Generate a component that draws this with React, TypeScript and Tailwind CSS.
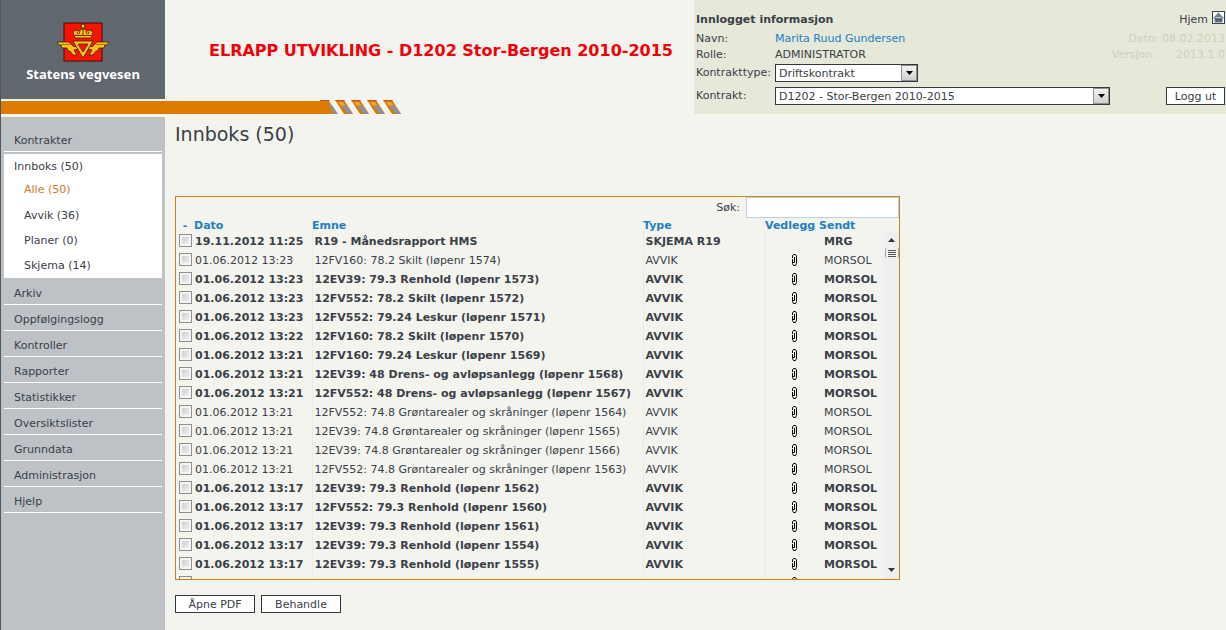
import React from "react";

const mainMenu = [
  "Arkiv",
  "Oppfølgingslogg",
  "Kontroller",
  "Rapporter",
  "Statistikker",
  "Oversiktslister",
  "Grunndata",
  "Administrasjon",
  "Hjelp",
];

const inboxMenu = ["Alle (50)", "Avvik (36)", "Planer (0)", "Skjema (14)"];

type Message = {
  date: string;
  subject: string;
  type: string;
  sender: string;
  unread: boolean;
  attachment: boolean;
};

function deviation(time: string, subject: string, unread = true): Message {
  return {
    date: `01.06.2012 ${time}`,
    subject,
    type: "AVVIK",
    sender: "MORSOL",
    unread,
    attachment: true,
  };
}

const messages: Message[] = [
  {
    date: "19.11.2012 11:25",
    subject: "R19 - Månedsrapport HMS",
    type: "SKJEMA R19",
    sender: "MRG",
    unread: true,
    attachment: false,
  },
  deviation("13:23", "12FV160: 78.2 Skilt (løpenr 1574)", false),
  deviation("13:23", "12EV39: 79.3 Renhold (løpenr 1573)"),
  deviation("13:23", "12FV552: 78.2 Skilt (løpenr 1572)"),
  deviation("13:23", "12FV552: 79.24 Leskur (løpenr 1571)"),
  deviation("13:22", "12FV160: 78.2 Skilt (løpenr 1570)"),
  deviation("13:21", "12FV160: 79.24 Leskur (løpenr 1569)"),
  deviation("13:21", "12EV39: 48 Drens- og avløpsanlegg (løpenr 1568)"),
  deviation("13:21", "12FV552: 48 Drens- og avløpsanlegg (løpenr 1567)"),
  deviation("13:21", "12FV552: 74.8 Grøntarealer og skråninger (løpenr 1564)", false),
  deviation("13:21", "12EV39: 74.8 Grøntarealer og skråninger (løpenr 1565)", false),
  deviation("13:21", "12EV39: 74.8 Grøntarealer og skråninger (løpenr 1566)", false),
  deviation("13:21", "12FV552: 74.8 Grøntarealer og skråninger (løpenr 1563)", false),
  deviation("13:17", "12EV39: 79.3 Renhold (løpenr 1562)"),
  deviation("13:17", "12FV552: 79.3 Renhold (løpenr 1560)"),
  deviation("13:17", "12EV39: 79.3 Renhold (løpenr 1561)"),
  deviation("13:17", "12EV39: 79.3 Renhold (løpenr 1554)"),
  deviation("13:17", "12EV39: 79.3 Renhold (løpenr 1555)"),
  deviation("13:17", "12FV552: 79.3 Renhold (løpenr 1556)"),
];

function Logo() {
  return (
    <svg width="54" height="40" viewBox="0 0 54 40" aria-hidden="true">
      <rect x="8" y="1" width="38" height="38" fill="#f91400" stroke="#3a0f0c" />
      <g fill="#f5c518" stroke="#4a1a08" strokeWidth="0.8" strokeLinejoin="round">
        <path d="M1 20h12l5 5 2-1 2 3-4 1 3 5h-4l-3-4h-2l-1-3H6l-1-3H3z" />
        <path d="M53 20H41l-5 5-2-1-2 3 4 1-3 5h4l3-4h2l1-3h5l1-3h2z" />
        <path fillRule="evenodd" d="M17 19h20L27 36zM22 22l5 8 5-8z" />
        <path d="M19 16l-2-6 3-2 3 1 3-2h2l3 2 3-1 3 2-2 6z" />
        <path d="M26 7V5h-1V3h1V2h2v1h1v2h-1v2z" />
      </g>
      <path
        d="M19 13.500h16M21 9.500l1 3M24 9l-1 3M27 8v5M30 9l1 3M33 9.500l-1 3"
        stroke="#8a2208"
        fill="none"
      />
      <path d="M5 22.500h9M40 22.500h9" stroke="#8a4a08" strokeWidth="0.7" fill="none" />
    </svg>
  );
}

function RoadStripes() {
  return (
    <svg width="81" height="14" viewBox="0 0 81 14" aria-hidden="true">
      <path d="M0 1h9l8 13H0z" fill="#dd7a00" />
      <path d="M-1 0h10l1 1h-11z" fill="#c2502a" />
      <path d="M8 5h4l6 9h-4z" fill="#8f9090" />
      {[15, 31, 47, 63].map((x) => (
        <g key={x}>
          <path d={`M${x} 0h9l9 14h-9z`} fill="#dd7a00" />
          <path d={`M${x} 0h9l1 1h-9z`} fill="#c2502a" />
          <path d={`M${x + 3} 2h5l3 4h-5z`} fill="#f0a030" />
          <path d={`M${x + 7} 7l4-3 7 10h-5z`} fill="#8f9090" />
        </g>
      ))}
    </svg>
  );
}

function HomeIcon() {
  return (
    <svg width="13" height="13" viewBox="0 0 13 13" aria-hidden="true">
      <rect x="0.5" y="0.5" width="12" height="12" fill="#fff" stroke="#3c4248" />
      <path d="M6.500 1.500L11.500 6.500v1H10.500V11.500H2.500V7.500H1.500v-1z" fill="#6f7f93" />
      <path d="M3 8.500h7M4.500 8v3M6.500 8v3M8.500 8v3" stroke="#3f4b5a" strokeWidth="0.8" />
      <path d="M3.500 6.500h6" stroke="#b5c0cd" />
    </svg>
  );
}

function PaperClip() {
  return (
    <svg width="7" height="12" viewBox="0 0 7 12" role="img" aria-label="Vedlegg" className="mx-auto block">
      <path
        d="M1.500 4v-2l1-1.500h2l1 1.500v7.500l-1 2h-2l-1-2v-4.500M3.500 3v5.500h-2"
        fill="none"
        stroke="#000"
      />
    </svg>
  );
}

function DropDown({ id, value, className }: { id: string; value: string; className: string }) {
  return (
    <div className={`flex h-[18px] border border-[#33383d] bg-white ${className}`}>
      <select id={id} className="min-w-0 grow appearance-none pt-px pl-[3px] text-[11px] leading-4 outline-none">
        <option>{value}</option>
      </select>
      <span className="flex w-4 items-center justify-center border border-[#8b9097] bg-linear-to-b from-[#f4f4f4] to-[#cfcfcf]">
        <svg width="7" height="4" viewBox="0 0 7 4" aria-hidden="true">
          <path d="M0 0h7L3.500 4z" fill="#000" />
        </svg>
      </span>
    </div>
  );
}

function Button({ children, className }: { children: React.ReactNode; className: string }) {
  return (
    <button
      type="button"
      className={`h-[18px] border border-[#33383d] bg-white pt-px text-center leading-4 ${className}`}
    >
      {children}
    </button>
  );
}

function Header() {
  return (
    <header className="flex h-[114px]">
      <div className="flex min-w-0 grow flex-col">
        <div className="flex h-[99px]">
          <div className="flex w-[164px] flex-none flex-col items-center bg-[#61676e] pt-[22px]">
            <Logo />
            <span className="mt-1 font-['Noto_Sans',sans-serif] text-[13px] leading-4 font-bold text-white">
              Statens vegvesen
            </span>
          </div>
          <h1 className="grow pt-[41px] pl-11 text-[16px] leading-5 font-bold whitespace-nowrap text-[#f0000a]">
            ELRAPP UTVIKLING - D1202 Stor-Bergen 2010-2015
          </h1>
        </div>
        <div className="mt-px flex h-[14px]">
          <div className="mt-px w-[319px] bg-[#dd7a00]" />
          <RoadStripes />
        </div>
      </div>

      <div className="w-[532px] flex-none bg-[#e6e8da] pt-[11px] pr-px pl-0.5">
        <div className="flex h-4 justify-between leading-[18px]">
          <h2 className="font-bold">Innlogget informasjon</h2>
          <a href="#hjem" className="flex gap-1">
            Hjem <HomeIcon />
          </a>
        </div>
        <div className="mt-[3px] flex h-4 leading-[18px]">
          <span className="w-[79px]">Navn:</span>
          <a href="#bruker" className="grow text-[#2180c0]">
            Marita Ruud Gundersen
          </a>
          <span className="text-[#ced0b8]">Dato: 08.02.2013</span>
        </div>
        <div className="flex h-4 leading-[18px]">
          <span className="w-[79px]">Rolle:</span>
          <span className="grow">ADMINISTRATOR</span>
          <span className="flex gap-5 text-[#ced0b8]">
            <span>Versjon:</span>
            <span>2013.1.0</span>
          </span>
        </div>
        <div className="mt-0.5 flex items-center">
          <label htmlFor="kontrakttype" className="w-[79px] pt-px">
            Kontrakttype:
          </label>
          <DropDown id="kontrakttype" value="Driftskontrakt" className="w-[143px]" />
        </div>
        <div className="mt-[5px] flex items-center">
          <label htmlFor="kontrakt" className="w-[79px] pt-px">
            Kontrakt:
          </label>
          <DropDown id="kontrakt" value="D1202 - Stor-Bergen 2010-2015" className="w-[335px]" />
          <Button className="ml-auto w-[59px]">Logg ut</Button>
        </div>
      </div>
    </header>
  );
}

function Sidebar() {
  return (
    <nav className="w-[164px] flex-none bg-[#bdc2c7] px-[3px] pt-[9px]">
      <a href="#kontrakter" className="block h-[26px] border-b border-white pt-[7px] pl-2.5 leading-4">
        Kontrakter
      </a>
      <div className="mt-0.5 mb-px bg-white">
        <a href="#innboks" className="block h-6 pt-px pl-2.5 leading-6">
          Innboks (50)
        </a>
        {inboxMenu.map((item, index) => (
          <a
            key={item}
            href="#innboks"
            className={`block h-[25px] pl-5 leading-6 ${index === 0 ? "text-[#d2782d]" : "pt-px"}`}
          >
            {item}
          </a>
        ))}
      </div>
      {mainMenu.map((item) => (
        <a key={item} href="#meny" className="block h-[26px] border-b border-white pt-[7px] pl-2.5 leading-4">
          {item}
        </a>
      ))}
    </nav>
  );
}

function ScrollBar() {
  return (
    <div className="mt-[13px] flex w-[15px] flex-none flex-col items-center bg-[#efeff0]">
      <svg width="7" height="4" viewBox="0 0 7 4" aria-hidden="true" className="mt-[7px]">
        <path d="M0 4h7L3.500 0z" fill="#333" />
      </svg>
      <div className="mt-[6px] flex h-[10px] w-[14px] flex-col items-center justify-center gap-px rounded-xs border-x border-[#a5a5a5] bg-[#f2f2f2]">
        <span className="h-px w-2 bg-[#555]" />
        <span className="h-px w-2 bg-[#555]" />
        <span className="h-px w-2 bg-[#555]" />
        <span className="h-px w-2 bg-[#555]" />
      </div>
      <svg width="7" height="4" viewBox="0 0 7 4" aria-hidden="true" className="mt-auto mb-[7px]">
        <path d="M0 0h7L3.500 4z" fill="#333" />
      </svg>
    </div>
  );
}

function MessageTable() {
  return (
    <table className="w-full table-fixed border-collapse text-left whitespace-nowrap">
      <colgroup>
        <col className="w-[18px]" />
        <col className="w-[118px]" />
        <col />
        <col className="w-[122px]" />
        <col className="w-[54px]" />
        <col className="w-[65px]" />
      </colgroup>
      <thead>
        <tr className="leading-[11px] text-[#2180c0]">
          <th className="p-0 pt-0.5 text-center">-</th>
          <th className="p-0 pt-0.5">Dato</th>
          <th className="p-0 pt-0.5">Emne</th>
          <th className="p-0 pt-0.5">Type</th>
          <th className="p-0 pt-0.5">Vedlegg</th>
          <th className="p-0 pt-0.5">Sendt</th>
        </tr>
      </thead>
      <tbody>
        {messages.map((message) => (
          <tr key={message.subject} className={`h-[19px] leading-4 ${message.unread ? "font-bold" : ""}`}>
            <td className="p-0 pl-[3px]">
              <input
                type="checkbox"
                aria-label={message.subject}
                className="block size-[13px] appearance-none border border-[#8e8f8f] bg-linear-to-br from-[#c4c8cf] to-[#f6f6f6] shadow-[inset_0_0_0_2px_#f4f4f4]"
              />
            </td>
            <td className="p-0 pt-[3px] pl-px">{message.date}</td>
            <td className="border-l border-[#e3ebee] p-0 pt-[3px] pl-0.5">{message.subject}</td>
            <td className="border-l border-[#e3ebee] p-0 pt-[3px] pl-0.5">{message.type}</td>
            <td className="border-l border-[#e3ebee] p-0 pl-1">{message.attachment && <PaperClip />}</td>
            <td className="p-0 pt-[3px] pl-[5px]">{message.sender}</td>
          </tr>
        ))}
      </tbody>
    </table>
  );
}

export default function App() {
  return (
    <div className="flex min-h-screen flex-col border-l border-[#4f5660] bg-[#f3f4ee] font-['DejaVu_Sans',Verdana,sans-serif] text-[11px] text-[#3a4047]">
      <Header />
      <div className="mt-[3px] flex grow">
        <Sidebar />
        <main className="min-w-0 grow pl-2.5">
          <h2 className="pt-[5px] text-[19px] leading-6">Innboks (50)</h2>
          <section className="mt-[50px] w-[725px] border border-[#c8811e]">
            <div className="flex h-[21px] items-center justify-end gap-1.5">
              <label htmlFor="sok" className="pt-0.5">
                Søk:
              </label>
              <input id="sok" type="text" className="h-full w-[153px] border border-[#b9d3e2] bg-white px-1 outline-none" />
            </div>
            <div className="flex h-[361px] overflow-hidden">
              <div className="min-w-0 grow">
                <MessageTable />
              </div>
              <ScrollBar />
            </div>
          </section>
          <div className="mt-[15px] flex gap-1.5">
            <Button className="w-20">Åpne PDF</Button>
            <Button className="w-20">Behandle</Button>
          </div>
        </main>
      </div>
    </div>
  );
}
